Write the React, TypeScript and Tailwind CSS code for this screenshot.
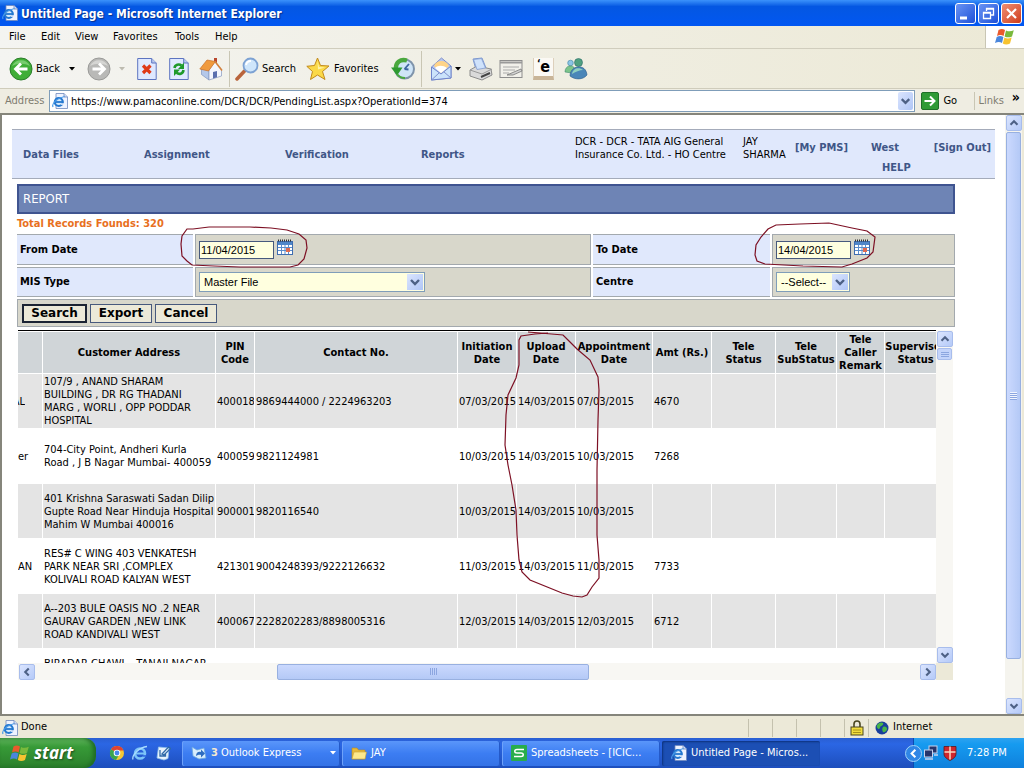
import type { ReactNode } from "react";

type Dir = "up" | "down" | "left" | "right";

const chevrons: Record<Dir, string> = {
  up: "M4 10 L8 6 L12 10",
  down: "M4 6 L8 10 L12 6",
  left: "M10 4 L6 8 L10 12",
  right: "M6 4 L10 8 L6 12",
};

function Chevron({ dir }: { dir: Dir }) {
  return (
    <svg viewBox="0 0 16 16" className="h-full w-full" fill="none" stroke="#4d6185" strokeWidth="2.4">
      <path d={chevrons[dir]} />
    </svg>
  );
}

function ScrollButton({ dir }: { dir: Dir }) {
  return (
    <button
      type="button"
      aria-label={`Scroll ${dir}`}
      className="block h-4 w-4 shrink-0 rounded-xs border border-[#a8bdec] bg-linear-to-br from-[#dbe5fe] to-[#b5caf8]"
    >
      <Chevron dir={dir} />
    </button>
  );
}

function IEIcon({ className }: { className: string }) {
  return (
    <svg viewBox="0 0 16 16" className={className}>
      <path d="M4 .5h8l3.500 3.500v11.500H4z" fill="#eef3ff" stroke="#6f88bd" strokeWidth=".8" />
      <path d="M12 .5V4h3.500" fill="#cfdcf5" stroke="#6f88bd" strokeWidth=".8" />
      <circle cx="6.800" cy="9" r="4" fill="#d5eafc" stroke="#2478d0" strokeWidth="2.200" />
      <path d="M3.500 9h7.500" stroke="#2478d0" strokeWidth="1.800" />
      <path d="M9 10.300h3v1.500H9z" fill="#eef3ff" />
      <path d="M1 14C-.5 11 4 5.500 12.500 3.500" fill="none" stroke="#4a9be8" strokeWidth="1.200" />
    </svg>
  );
}

function Flag({ className }: { className: string }) {
  return (
    <svg viewBox="0 0 20 18" className={className}>
      <path d="M3.500 2C6 .5 8 .8 10 2L8.600 8C6.500 6.800 4.500 6.800 2 8z" fill="#ea5a2c" />
      <path d="M11 2.400C13.500 3.700 16 3.500 18.800 2.200L17 8.400C14.500 9.600 12 9.600 9.600 8.400z" fill="#79b93c" />
      <path d="M1.700 9C4 7.800 6.200 7.800 8.400 9L7 15C5 13.800 2.800 13.800 0 15z" fill="#4a86dc" />
      <path d="M9.400 9.400C11.700 10.700 14 10.700 16.700 9.400L15 15.500C12.500 16.800 10 16.800 7.800 15.500z" fill="#f7c331" />
    </svg>
  );
}

function Calendar() {
  return (
    <svg viewBox="0 0 16 16" className="h-4 w-4">
      <rect x=".5" y="2.500" width="15" height="13" fill="#fff" stroke="#3f6db0" />
      <rect x="1" y="3" width="14" height="3" fill="#4f86c8" />
      <path d="M1 1.500h14" stroke="#333" strokeWidth="2" strokeDasharray="1 1" />
      <path d="M1 8.500h14M1 11.500h14M4.500 6v9M8 6v9M11.500 6v9" stroke="#5b8dcc" />
      <rect x="9" y="9" width="4" height="4" fill="#e06a50" />
    </svg>
  );
}

function Caret({ color }: { color: string }) {
  return (
    <svg viewBox="0 0 6 4" className="h-[4px] w-[6px] shrink-0">
      <path d="M0 0h6L3 3.500z" fill={color} />
    </svg>
  );
}

function Tool({ label, className, children }: { label: string; className: string; children: ReactNode }) {
  return (
    <button type="button" aria-label={label} className={`flex shrink-0 items-center ${className}`}>
      {children}
    </button>
  );
}

function Divider({ className }: { className: string }) {
  return <span className={`h-9 w-px shrink-0 bg-[#c9c6b4] ${className}`} />;
}

function Toolbar() {
  return (
    <div className="flex h-10 shrink-0 items-center border-b border-[#cfccbb] bg-linear-to-r from-[#f4f4f1] to-[#ece9d6]">
      <Tool label="Back" className="ml-[9px] w-[78px]">
        <svg viewBox="0 0 24 24" className="h-6 w-6">
          <circle cx="12" cy="12" r="11" fill="#3fae37" stroke="#2c7e2b" />
          <path d="M3 9a10 10 0 0 1 18 0C15 6 9 6 3 9z" fill="#8fd884" opacity=".7" />
          <path d="M18.500 12H7M12 6.500L6.500 12l5.500 5.500" fill="none" stroke="#fff" strokeWidth="2.800" />
        </svg>
        <span className="mr-[9px] ml-[3px] pt-0.5">Back</span>
        <Caret color="#000" />
      </Tool>
      <Tool label="Forward" className="w-[50px]">
        <svg viewBox="0 0 24 24" className="mr-[8px] h-6 w-6">
          <circle cx="12" cy="12" r="11" fill="#b9b9b7" stroke="#9a9a98" />
          <path d="M3 9a10 10 0 0 1 18 0C15 6 9 6 3 9z" fill="#dcdcda" opacity=".8" />
          <path d="M5.500 12H17M12 6.500l5.500 5.500-5.500 5.500" fill="none" stroke="#fff" strokeWidth="2.800" />
        </svg>
        <Caret color="#bdbbb0" />
      </Tool>
      <Tool label="Stop" className="w-8">
        <svg viewBox="0 0 20 24" className="h-6 w-5">
          <path d="M.7 1.500h14l4.500 4.500v16.500H.7z" fill="#dfe9ff" stroke="#5d74c0" />
          <path d="M14.700 1.500V6h4.500" fill="#b9c9ee" stroke="#5d74c0" />
          <path d="M6 8.500l7.500 7.500M13.500 8.500L6 16" stroke="#df3a18" strokeWidth="3.200" />
        </svg>
      </Tool>
      <Tool label="Refresh" className="w-[30px]">
        <svg viewBox="0 0 20 24" className="h-6 w-5">
          <path d="M.7 1.500h14l4.500 4.500v16.500H.7z" fill="#dfe9ff" stroke="#5d74c0" />
          <path d="M14.700 1.500V6h4.500" fill="#b9c9ee" stroke="#5d74c0" />
          <path d="M5.500 11C6 7.500 10 6.500 12.500 8.500" fill="none" stroke="#1f9a2b" strokeWidth="2.600" />
          <path d="M15 5.500v6.500H9z" fill="#1f9a2b" />
          <path d="M14.500 13C14 17 10 17.800 7.500 15.800" fill="none" stroke="#1f9a2b" strokeWidth="2.600" />
          <path d="M5 19v-6.500h6z" fill="#1f9a2b" />
        </svg>
      </Tool>
      <Tool label="Home" className="w-[30px]">
        <svg viewBox="0 0 24 24" className="h-6 w-6">
          <rect x="15" y="1" width="3" height="6" fill="#b9482e" />
          <path d="M2.500 12v5.500L10 23V12z" fill="#b4c8ea" stroke="#7f93bd" strokeWidth=".7" />
          <path d="M10 13l6-8.500 6.500 8V19L10 23z" fill="#f3f6fd" stroke="#8798be" strokeWidth=".7" />
          <path d="M14 15l4-1v6.300l-4 1.300z" fill="#5a6fae" />
          <path d="M.8 12L8 3l8.500 1.500L9.500 14z" fill="#f09a3e" stroke="#c8702a" strokeWidth=".7" />
          <path d="M16 4.500l7 9" stroke="#d5813a" strokeWidth="1.600" />
        </svg>
      </Tool>
      <Divider className="mr-[5px]" />
      <Tool label="Search" className="w-[71px]">
        <svg viewBox="0 0 24 24" className="mr-[3px] h-6 w-6">
          <path d="M2 22l7.500-8" stroke="#b9643c" strokeWidth="3.500" strokeLinecap="round" />
          <circle cx="15.500" cy="8.500" r="7" fill="#cfe6fb" stroke="#7da2d3" strokeWidth="1.800" />
          <path d="M11 8a5 5 0 0 1 5-4" fill="none" stroke="#fff" strokeWidth="2" />
        </svg>
        <span className="pt-0.5">Search</span>
      </Tool>
      <Tool label="Favorites" className="w-[85px]">
        <svg viewBox="0 0 24 24" className="mr-[4px] h-6 w-6">
          <path
            d="M11.500 1l3 7.500 8.500.5-6.500 5.500 2.500 8-7.500-4.500L4.500 22.500l2-8L.8 9.300l7.700-.8z"
            fill="#fbd947"
            stroke="#c28a1c"
          />
          <path d="M11.500 4l1.500 6 6 .5-7 2z" fill="#fff3a8" />
        </svg>
        <span className="pt-0.5">Favorites</span>
      </Tool>
      <Tool label="History" className="w-[30px]">
        <svg viewBox="0 0 24 24" className="h-6 w-6">
          <circle cx="13.500" cy="12" r="9.500" fill="#cfe5f8" stroke="#7f94ab" strokeWidth="2" />
          <path d="M13.500 12l4.500-5M13.500 12l4 .5" stroke="#3c64a0" strokeWidth="1.800" />
          <path d="M16 3.500C9 1.500 5 5.500 4.800 11" fill="none" stroke="#4aa83e" strokeWidth="4.400" />
          <path d="M0 10.500h11.500L6 18.500z" fill="#2f9a31" />
          <path d="M6 17c2 3 5 4 8 4" fill="none" stroke="#4aa83e" strokeWidth="2" />
        </svg>
      </Tool>
      <Divider className="mr-[8px]" />
      <Tool label="Mail" className="w-[39px]">
        <svg viewBox="0 0 24 24" className="mr-px h-6 w-6">
          <path d="M1.500 10L11.500 1l9.500 8v12L1.500 23z" fill="#b6c6ee" stroke="#7f8fcb" />
          <path d="M4 9c2-6 12-7 15 0l-8 7z" fill="#ffd489" />
          <path d="M5 11c3-3 8-3 12 0l-6 5z" fill="#fff" />
          <path d="M1.500 10l9.500 7 10-8v12L1.500 23z" fill="#cbe3fb" stroke="#6f84cb" />
          <path d="M1.500 23l7.500-7M21 21l-7-6" stroke="#7f8fcb" />
        </svg>
        <Caret color="#000" />
      </Tool>
      <Tool label="Print" className="w-[30px]">
        <svg viewBox="0 0 24 24" className="h-6 w-6">
          <path d="M4 2l9-1 4 10-10 2z" fill="#cfe2fb" stroke="#7f99cf" />
          <path d="M1 13l7-4 14 3 1 6-10 5-12-4z" fill="#dadada" stroke="#8c8c8c" />
          <path d="M4.500 2.500l8-1L16.500 11 8 12.500z" fill="#cfe2fb" stroke="#7f99cf" strokeWidth=".8" />
          <path d="M1 13l12 4 10-5" fill="none" stroke="#999" />
          <path d="M12 20l9-4" stroke="#444" strokeWidth="2" />
        </svg>
      </Tool>
      <Tool label="Edit" className="w-[34px]">
        <svg viewBox="0 0 24 24" className="h-6 w-6">
          <rect x="1" y="3.500" width="22" height="17" fill="#f1f0ea" stroke="#8d8d8d" />
          <path d="M1 5.500h22" stroke="#9a9a9a" strokeWidth="2" />
          <path d="M4 10h16M4 13h12M4 16h6" stroke="#aaa" />
          <path d="M8 18l14-6 1 2-9 4z" fill="#d3d3d3" stroke="#777" strokeWidth=".8" />
        </svg>
      </Tool>
      <Tool label="Research" className="mr-[10px] h-[22px] w-[21px] border-x border-b-4 border-x-[#ddd0bc] border-b-[#c9b598] bg-[#fbf9f4]">
        <span className="w-full text-center text-base leading-none font-bold">
          <span className="align-top text-[10px]">‘</span>e
        </span>
      </Tool>
      <Tool label="Messenger" className="w-6">
        <svg viewBox="0 0 24 24" className="h-6 w-6">
          <circle cx="6.500" cy="6" r="2.800" fill="#8cc4e4" stroke="#3d84a8" strokeWidth=".6" />
          <path d="M1 15c0-7 8-8 10-3l-3 4z" fill="#7cc48a" stroke="#3b8a6c" strokeWidth=".6" />
          <circle cx="14.500" cy="5.500" r="4" fill="#4fa080" stroke="#2a6a68" strokeWidth=".6" />
          <path d="M6 19c0-11 16-13 17-1-4 5-12 5-17 1z" fill="#4a86b8" stroke="#2b5c8c" strokeWidth=".6" />
          <path d="M8 17c1-6 7-7 11-4-3 0-8 2-11 4z" fill="#8fd0c0" />
        </svg>
      </Tool>
    </div>
  );
}

const labelCell = "flex items-center border-y border-[#a3a9ae] bg-[#e0e8fc] pt-px pl-[3px] text-[11px] font-bold";

function DateField({ id, label, value }: { id: string; label: string; value: string }) {
  return (
    <>
      <label htmlFor={id} className={labelCell}>
        {label}
      </label>
      <div className="flex items-center gap-[3px] border border-[#a3a9ae] bg-[#d8d7cb] pl-[3px]">
        <input
          id={id}
          defaultValue={value}
          className="h-[18px] w-[75px] border border-[#47597d] bg-[#ffffdf] pl-px font-[Liberation_Sans,sans-serif] text-[11px] outline-none"
        />
        <button type="button" aria-label={`Pick ${label}`} className="mb-[6px]">
          <Calendar />
        </button>
      </div>
    </>
  );
}

function SelectField({ id, label, value, width }: { id: string; label: string; value: string; width: string }) {
  return (
    <>
      <label htmlFor={id} className={labelCell}>
        {label}
      </label>
      <div className="flex items-center border border-[#a3a9ae] bg-[#d8d7cb] pl-[3px]">
        <div className={`relative ${width}`}>
          <select
            id={id}
            className="block h-5 w-full appearance-none border border-[#7f9db9] bg-[#ffffdf] pl-[4px] font-[Liberation_Sans,sans-serif] text-[11px] outline-none"
          >
            <option>{value}</option>
          </select>
          <span className="pointer-events-none absolute top-0.5 right-0.5 h-4 w-4 bg-linear-to-br from-[#dbe5fe] to-[#b0c6f6]">
            <Chevron dir="down" />
          </span>
        </div>
      </div>
    </>
  );
}

const columns = [
  { title: "", width: "w-[25px]" },
  { title: "Customer Address", width: "w-[173px]" },
  { title: "PIN\nCode", width: "w-[39px]" },
  { title: "Contact No.", width: "w-[203px]" },
  { title: "Initiation\nDate", width: "w-[59px]" },
  { title: "Upload\nDate", width: "w-[59px]" },
  { title: "Appointment\nDate", width: "w-[77px]" },
  { title: "Amt (Rs.)", width: "w-[59px]" },
  { title: "Tele\nStatus", width: "w-[64px]" },
  { title: "Tele\nSubStatus", width: "w-[61px]" },
  { title: "Tele\nCaller\nRemark", width: "w-[48px]" },
  { title: "Supervisor\nStatus", width: "w-[62px]" },
];

const rows = [
  ["AL", "107/9 , ANAND SHARAM\nBUILDING , DR RG THADANI\nMARG , WORLI , OPP PODDAR\nHOSPITAL", "400018", "9869444000 / 2224963203", "07/03/2015", "14/03/2015", "07/03/2015", "4670"],
  ["er", "704-City Point, Andheri Kurla\nRoad , J B Nagar Mumbai- 400059", "400059", "9821124981", "10/03/2015", "14/03/2015", "10/03/2015", "7268"],
  ["", "401 Krishna Saraswati Sadan Dilip\nGupte Road Near Hinduja Hospital\nMahim W Mumbai 400016", "900001", "9820116540", "10/03/2015", "14/03/2015", "10/03/2015", ""],
  ["AN", "RES# C WING 403 VENKATESH\nPARK NEAR SRI ,COMPLEX\nKOLIVALI ROAD KALYAN WEST", "421301", "9004248393/9222126632", "11/03/2015", "14/03/2015", "11/03/2015", "7733"],
  ["", "A--203 BULE OASIS NO .2 NEAR\nGAURAV GARDEN ,NEW LINK\nROAD KANDIVALI WEST", "400067", "2228202283/8898005316", "12/03/2015", "14/03/2015", "12/03/2015", "6712"],
  ["", "BIRADAR CHAWL , TANAJI NAGAR\n\n\n", "", "", "", "", "", ""],
];

function Records() {
  return (
    <div className="mt-[3px] grid grid-cols-[minmax(0,1fr)_17px] grid-rows-[333px_17px] pr-[2px] pl-px">
      <div className="overflow-hidden border-t border-black pt-px">
        <table className="w-[929px] table-fixed border-separate border-spacing-0 text-[11px] leading-[13px]">
          <thead>
            <tr className="h-[42px] bg-[#d0d5d8]">
              {columns.map((c, i) => (
                <th key={i} className={`border-r border-b border-white p-0 text-center font-bold whitespace-pre ${c.width}`}>
                  {c.title}
                </th>
              ))}
            </tr>
          </thead>
          <tbody>
            {rows.map((row, r) => (
              <tr key={r} className="h-[55px] odd:bg-[#e4e4e4] even:bg-white">
                {columns.map((_, i) => (
                  <td key={i} className="overflow-hidden border-r border-b border-white p-0 pl-px whitespace-pre first:pl-0">
                    {i === 0 && row[0] === "AL" ? (
                      <span className="flex w-[7px] justify-end overflow-hidden">AL</span>
                    ) : (
                      row[i]
                    )}
                  </td>
                ))}
              </tr>
            ))}
          </tbody>
        </table>
      </div>
      <div className="flex flex-col items-center gap-px bg-[#f8f7f3] pt-px">
        <ScrollButton dir="up" />
        <span className="flex h-3 w-[15px] flex-col items-center justify-center gap-px rounded-xs border border-[#a8bdec] bg-[#c4d4fb]">
          <span className="h-px w-2 bg-[#8ca6e0]" />
          <span className="h-px w-2 bg-[#8ca6e0]" />
          <span className="h-px w-2 bg-[#8ca6e0]" />
        </span>
        <span className="flex-1" />
        <ScrollButton dir="down" />
      </div>
      <div className="flex items-center bg-[#f8f7f3] pl-px">
        <ScrollButton dir="left" />
        <span className="flex-[243]" />
        <span className="flex h-4 flex-[310] items-center justify-center gap-px rounded-xs border border-[#98b0e0] bg-linear-to-b from-[#cbd9fe] to-[#b4c9f6]">
          <span className="h-[7px] w-px bg-[#8ca6e0]" />
          <span className="h-[7px] w-px bg-[#8ca6e0]" />
          <span className="h-[7px] w-px bg-[#8ca6e0]" />
          <span className="h-[7px] w-px bg-[#8ca6e0]" />
        </span>
        <span className="flex-[332]" />
        <ScrollButton dir="right" />
      </div>
      <div className="bg-[#ece9d8]" />
    </div>
  );
}

function Nav() {
  const link = "text-[11px] font-bold text-[#3f5687]";
  return (
    <nav className="mr-[10px] ml-[10px] flex h-[50px] border-y border-[#a4abba] bg-[#e0e8fc] pl-[11px]">
      <div className="grid grid-cols-[121px_141px_136px_154px] items-center pt-[3px]">
        <a href="#files" className={link}>Data Files</a>
        <a href="#assignment" className={link}>Assignment</a>
        <a href="#verification" className={link}>Verification</a>
        <a href="#reports" className={link}>Reports</a>
      </div>
      <p className="w-[168px] shrink-0 pt-[5px] text-[11px] leading-[13px]">
        DCR - DCR - TATA AIG General
        <br />
        Insurance Co. Ltd. - HO Centre
      </p>
      <p className="w-[52px] shrink-0 pt-[5px] text-[11px] leading-[13px]">
        JAY
        <br />
        SHARMA
      </p>
      <div className="flex min-w-0 flex-1 items-start justify-between pt-[8px] pr-[4px] leading-5">
        <a href="#pms" className={link}>[My PMS]</a>
        <div className="flex flex-col">
          <a href="#west" className={link}>West</a>
          <a href="#help" className={`${link} pl-[11px]`}>HELP</a>
        </div>
        <a href="#out" className={link}>[Sign Out]</a>
      </div>
    </nav>
  );
}

function Task({ active, children }: { active?: boolean; children: ReactNode }) {
  return (
    <button
      type="button"
      className={`flex h-[25px] w-[158px] shrink-0 items-center gap-[4px] rounded-xs pl-[9px] text-left text-[11px] text-white ${
        active
          ? "bg-[#1c4fb4] shadow-[inset_1px_1px_2px_#0d327c]"
          : "bg-linear-to-b from-[#5a96fa] via-[#3c7df2] to-[#3472e6] shadow-[inset_1px_0_0_#6ea2fa,inset_-1px_0_0_#2459c8]"
      }`}
    >
      {children}
    </button>
  );
}

function Taskbar() {
  return (
    <footer className="flex h-[30px] shrink-0 items-center bg-linear-to-b from-[#2a5fd2] via-[#2b66e4] via-20% to-[#1d4ebc]">
      <button
        type="button"
        className="flex h-full w-24 shrink-0 items-center gap-[4px] rounded-r-xl bg-linear-to-b from-[#5fb45c] via-[#379a37] via-30% to-[#2b7f2c] pl-[10px] text-white shadow-[inset_-3px_0_4px_#1f6a24]"
      >
        <Flag className="h-[19px] w-5" />
        <span className="font-[Open_Sans,sans-serif] text-[17px] font-bold italic [text-shadow:1px_1px_2px_#1d4a1d]">start</span>
      </button>
      <div className="flex w-[86px] shrink-0 items-center gap-[7px] pl-[13px]">
        <svg viewBox="0 0 16 16" className="h-4 w-4">
          <circle cx="8" cy="8" r="7" fill="#f3c834" />
          <path d="M8 8L2 4.300A7 7 0 0 1 14.500 5.500H8z" fill="#df4332" />
          <path d="M8 8L2 4.300A7 7 0 0 0 7 15l3-5z" fill="#3aa551" />
          <circle cx="8" cy="8" r="3.300" fill="#fff" />
          <circle cx="8" cy="8" r="2.400" fill="#4788ee" />
        </svg>
        <svg viewBox="0 0 16 16" className="h-4 w-4">
          <circle cx="8" cy="8.500" r="5" fill="none" stroke="#7cc4f8" strokeWidth="2.600" />
          <path d="M4 8.500h9" stroke="#7cc4f8" strokeWidth="2" />
          <path d="M10.500 10.200h4v1.500h-4z" fill="#2b62dc" />
          <path d="M1 14.500C-.5 10 8 2 15 1.500" fill="none" stroke="#a9dcff" strokeWidth="1.300" />
        </svg>
        <svg viewBox="0 0 16 16" className="h-4 w-4">
          <path d="M3.500 2L14 3l-1 10.500-4 1.500-7-2z" fill="#e8f3fc" stroke="#8fc0ea" strokeWidth=".8" />
          <path d="M5 5v6h5.500V8M7 9l6.500-7 2 1.500L9 10z" fill="none" stroke="#2f6aa8" strokeWidth="1.300" />
        </svg>
      </div>
      <div className="flex min-w-0 flex-1 gap-[2px] overflow-hidden">
        <Task>
          <svg viewBox="0 0 16 16" className="h-4 w-4">
            <path d="M1 2l5 3 7-2 2 10-7 1-6-3z" fill="#d7ecfc" stroke="#6ba6dd" strokeWidth=".8" />
            <path d="M5 11c0-4 3-5 5-4V4.500l4 4-4 4V10c-2-.5-3 0-5 1z" fill="#2d6cc0" />
          </svg>
          <span>
            <span className="font-bold text-[#f5e9cf]">3</span> Outlook Express
          </span>
          <span className="mr-1 ml-auto flex">
            <Caret color="#fff" />
          </span>
        </Task>
        <Task>
          <svg viewBox="0 0 16 14" className="h-[14px] w-4">
            <path d="M1 2h5l1.500 2H14v9H1z" fill="#e6b93c" stroke="#b98a1e" strokeWidth=".6" />
            <path d="M3 6h12.500L14 13H1z" fill="#fde98c" stroke="#c9a136" strokeWidth=".6" />
          </svg>
          JAY
        </Task>
        <Task>
          <svg viewBox="0 0 16 16" className="h-4 w-4">
            <rect width="16" height="16" rx="1" fill="#28ad4c" />
            <path d="M13 4.500H6C3 4.500 3 8 6 8h4c3 0 3 3.500 0 3.500H3" fill="none" stroke="#fff" strokeWidth="1.500" />
          </svg>
          Spreadsheets - [ICIC...
        </Task>
        <Task active>
          <IEIcon className="h-4 w-4" />
          Untitled Page - Micros...
        </Task>
      </div>
      <div className="flex h-full w-[111px] shrink-0 items-center border-l border-[#0b4bb0] bg-linear-to-b from-[#2ba2f0] via-[#169bf0] via-20% to-[#0f80dc] text-[11px] text-white">
        <button type="button" aria-label="Show hidden icons" className="-ml-[9px] h-[17px] w-[17px] shrink-0 rounded-full border border-[#9fd2f8] bg-[#2f86e6]">
          <svg viewBox="0 0 16 16" fill="none" stroke="#fff" strokeWidth="2.200">
            <path d="M10 4L6 8l4 4" />
          </svg>
        </button>
        <svg viewBox="0 0 16 16" className="ml-px h-4 w-4 shrink-0">
          <rect x="6" y="1" width="8" height="7" fill="#27356b" stroke="#c8d4ee" />
          <rect x="1.500" y="5" width="8" height="7" fill="#27356b" stroke="#c8d4ee" />
          <path d="M2 14h8M11 10h4" stroke="#c8d4ee" strokeWidth="1.500" />
        </svg>
        <svg viewBox="0 0 14 16" className="ml-[4px] h-4 w-[14px] shrink-0">
          <path d="M1 1.500h12V9c0 3-3 5-6 6.500C4 14 1 12 1 9z" fill="#d0262c" stroke="#5a1a1a" strokeWidth=".8" />
          <path d="M7 1.500v13M1.500 7h11" stroke="#f7d9c0" strokeWidth="1.500" />
        </svg>
        <span className="ml-[10px] whitespace-nowrap">7:28 PM</span>
      </div>
    </footer>
  );
}

export default function App() {
  return (
    <div className="relative flex h-screen flex-col overflow-hidden bg-[#ece9d8] font-[DejaVu_Sans_Condensed,sans-serif] text-[11px] text-black">
      <header className="flex h-[26px] shrink-0 items-center bg-linear-to-b from-[#3b92fb] via-[#0457e2] via-25% to-[#0257f2] pl-[2px] text-white">
        <IEIcon className="h-4 w-4" />
        <h1 className="ml-[3px] flex-1 pt-px text-xs font-bold [text-shadow:1px_1px_1px_#0a2f8a]">
          Untitled Page - Microsoft Internet Explorer
        </h1>
        <div className="flex gap-[2px] pr-[2px]">
          <button type="button" aria-label="Minimize" className="h-[21px] w-[21px] rounded-[3px] border border-white bg-linear-to-br from-[#6a93f3] to-[#1e4fd8]">
            <svg viewBox="0 0 19 19"><path d="M4 14h7" stroke="#fff" strokeWidth="3" /></svg>
          </button>
          <button type="button" aria-label="Restore" className="h-[21px] w-[21px] rounded-[3px] border border-white bg-linear-to-br from-[#6a93f3] to-[#1e4fd8]">
            <svg viewBox="0 0 19 19" fill="none" stroke="#fff">
              <path d="M7.500 7V4.500h7V11H12M7 5h8M4.500 8.500h7v6h-7zM4 9h8" strokeWidth="1.300" />
            </svg>
          </button>
          <button type="button" aria-label="Close" className="h-[21px] w-[21px] rounded-[3px] border border-white bg-linear-to-br from-[#ee8d72] to-[#cf3a16]">
            <svg viewBox="0 0 19 19"><path d="M5 5l9 9M14 5l-9 9" stroke="#fff" strokeWidth="2.200" /></svg>
          </button>
        </div>
      </header>

      <div className="flex h-[23px] shrink-0 items-center border-b border-[#d0cdbd] bg-linear-to-r from-[#f4f4f1] to-[#ece9d6] pl-[9px]">
        <div className="grid flex-1 grid-cols-[32px_34px_38px_62px_40px_40px] pt-px">
          <button type="button" className="text-left">File</button>
          <button type="button" className="text-left">Edit</button>
          <button type="button" className="text-left">View</button>
          <button type="button" className="text-left">Favorites</button>
          <button type="button" className="text-left">Tools</button>
          <button type="button" className="text-left">Help</button>
        </div>
        <div className="flex h-full w-[39px] items-center justify-center border-l border-[#c9c6b4] bg-white">
          <Flag className="h-[18px] w-5" />
        </div>
      </div>

      <Toolbar />

      <div className="flex h-[24px] shrink-0 items-center bg-[#efede2] pl-[5px]">
        <label htmlFor="address" className="w-[44px] text-[#7f7c70]">Address</label>
        <div className="flex h-[22px] min-w-0 flex-1 items-center border border-[#7f9db9] bg-white pl-[2px]">
          <IEIcon className="h-4 w-4 shrink-0" />
          <input
            id="address"
            defaultValue="https://www.pamaconline.com/DCR/DCR/PendingList.aspx?OperationId=374"
            className="ml-[3px] h-full min-w-0 flex-1 bg-white text-[11px] outline-none"
          />
          <button type="button" aria-label="Address history" className="mr-px h-[18px] w-[15px] rounded-xs bg-linear-to-br from-[#dbe5fe] to-[#b0c6f6]">
            <Chevron dir="down" />
          </button>
        </div>
        <button type="button" className="ml-[6px] flex w-[54px] items-center gap-[4px] border-r border-[#c9c6b4]">
          <svg viewBox="0 0 18 18" className="h-[18px] w-[18px]">
            <rect x=".5" y=".5" width="17" height="17" rx="1.500" fill="#2f9a35" stroke="#1f6f27" />
            <path d="M3.500 9H13M9 4.500L13.500 9 9 13.500" fill="none" stroke="#fff" strokeWidth="2" />
          </svg>
          Go
        </button>
        <span className="ml-[3px] text-[#7f7c70]">Links</span>
        <span className="mr-[4px] mb-[8px] ml-[8px] text-sm leading-none font-bold">»</span>
      </div>

      <div className="flex min-h-0 flex-1 border-t-2 border-b-2 border-l-2 border-[#85857b] bg-white">
        <main className="min-w-0 flex-1 overflow-hidden pt-[14px]">
          <Nav />
          <section className="mt-[5px] mr-[50px] ml-[15px]">
            <h2 className="flex h-[30px] items-center border-2 border-[#3f5490] bg-[#6e84b5] pl-[4px] text-[13px] text-white">REPORT</h2>
            <p className="h-5 text-[11px] leading-5 font-bold text-[#e8701e]">Total Records Founds: 320</p>
            <form className="grid grid-cols-[176fr_396fr_177fr_183fr] grid-rows-[31px_30px_28px] gap-[2px]">
              <DateField id="from" label="From Date" value="11/04/2015" />
              <DateField id="to" label="To Date" value="14/04/2015" />
              <SelectField id="mis" label="MIS Type" value="Master File" width="w-[226px]" />
              <SelectField id="centre" label="Centre" value="--Select--" width="w-[74px]" />
              <div className="col-span-4 flex items-center gap-[3px] border border-[#a3a9ae] bg-[#d8d7cb] pl-[4px] font-[DejaVu_Sans,sans-serif] text-xs font-bold">
                <button type="button" className="h-[19px] w-[65px] border-2 border-[#1b2333] bg-[#ece9d8] leading-none">Search</button>
                <button type="button" className="h-[19px] w-[62px] border border-[#47597d] bg-[#ece9d8] leading-none">Export</button>
                <button type="button" className="h-[19px] w-[62px] border border-[#47597d] bg-[#ece9d8] leading-none">Cancel</button>
              </div>
            </form>
            <Records />
          </section>
        </main>
        <div className="flex w-[17px] shrink-0 flex-col items-center gap-px bg-[#f5f4ee]">
          <ScrollButton dir="up" />
          <span className="flex w-[15px] flex-[528] flex-col items-center justify-center rounded-xs border border-[#98b0e0] bg-linear-to-r from-[#cbd9fe] to-[#b4c9f6]">
            <span className="h-px w-[7px] bg-[#f1f5ff]" />
            <span className="h-px w-[7px] bg-[#8ca6e0]" />
            <span className="h-px w-[7px] bg-[#f1f5ff]" />
            <span className="h-px w-[7px] bg-[#8ca6e0]" />
            <span className="h-px w-[7px] bg-[#f1f5ff]" />
            <span className="h-px w-[7px] bg-[#8ca6e0]" />
            <span className="h-px w-[7px] bg-[#f1f5ff]" />
            <span className="h-px w-[7px] bg-[#8ca6e0]" />
          </span>
          <span className="flex-[37]" />
          <ScrollButton dir="down" />
        </div>
        <div className="w-[2px] shrink-0 bg-[#ece9d8]" />
      </div>

      <div className="flex h-[22px] shrink-0 items-center bg-[#ece9d8] pt-px pl-[2px]">
        <IEIcon className="h-4 w-4" />
        <span className="ml-[3px] flex-1">Done</span>
        <div className="flex h-[18px] [&>span]:flex [&>span]:w-6 [&>span]:items-center [&>span]:justify-center [&>span]:border-l [&>span]:border-[#c4c1ae]">
          <span />
          <span />
          <span />
          <span />
          <span>
            <svg viewBox="0 0 14 16" className="h-4 w-[14px]">
              <path d="M4 7V4a3 3 0 0 1 6 0v3" fill="none" stroke="#4a4620" strokeWidth="1.600" />
              <rect x="1" y="7" width="12" height="8" fill="#f2dd3c" stroke="#4a4620" />
              <path d="M3 10h8M3 12.500h8" stroke="#a8921c" />
            </svg>
          </span>
        </div>
        <div className="flex h-[18px] w-[156px] items-center gap-[4px] border-l border-[#c4c1ae] pl-[6px]">
          <svg viewBox="0 0 14 14" className="h-[14px] w-[14px]">
            <circle cx="7" cy="7" r="6.500" fill="#1a3f9c" />
            <path d="M2 4c2-3 5-3 6-2s-1 3-2 3-1 3-2 3-3-2-2-4z" fill="#49b548" />
            <path d="M8 6c2-1 4 0 4 2s-3 4-4 3-1-4 0-5z" fill="#49b548" />
          </svg>
          Internet
        </div>
      </div>

      <Taskbar />

      <svg viewBox="0 0 1024 768" className="pointer-events-none absolute top-0 left-0 h-[768px] w-[1024px]" fill="none" stroke="#7d1024" strokeWidth="1.200">
        <path d="M209 227L193 229 187 229 182 236 181 244 182 256 187 261 192 265 214 266 240 267 290 267 298 265 304 259 307 248 306 240 299 234 287 230 271 228 250 227 209 227" />
        <path d="M829 223L852 228 867 231 875 237 873 252 867 258 852 264 842 267 803 266 765 264 757 261 755 255 756 245 761 237 768 229 776 225 800 224 829 223" />
        <path d="M528 332L540 333 563 335 569 341 577 349 590 360 598 377 599 390 598 420 597 470 597 535 599 560 599 578 592 587 587 595 582 597 573 596 562 593 530 580 522 572 519 560 517 535 516 510 512 485 508 465 505 445 506 415 508 395 516 378 519 365 519 340 521 336 535 334 548 333" />
      </svg>
    </div>
  );
}
